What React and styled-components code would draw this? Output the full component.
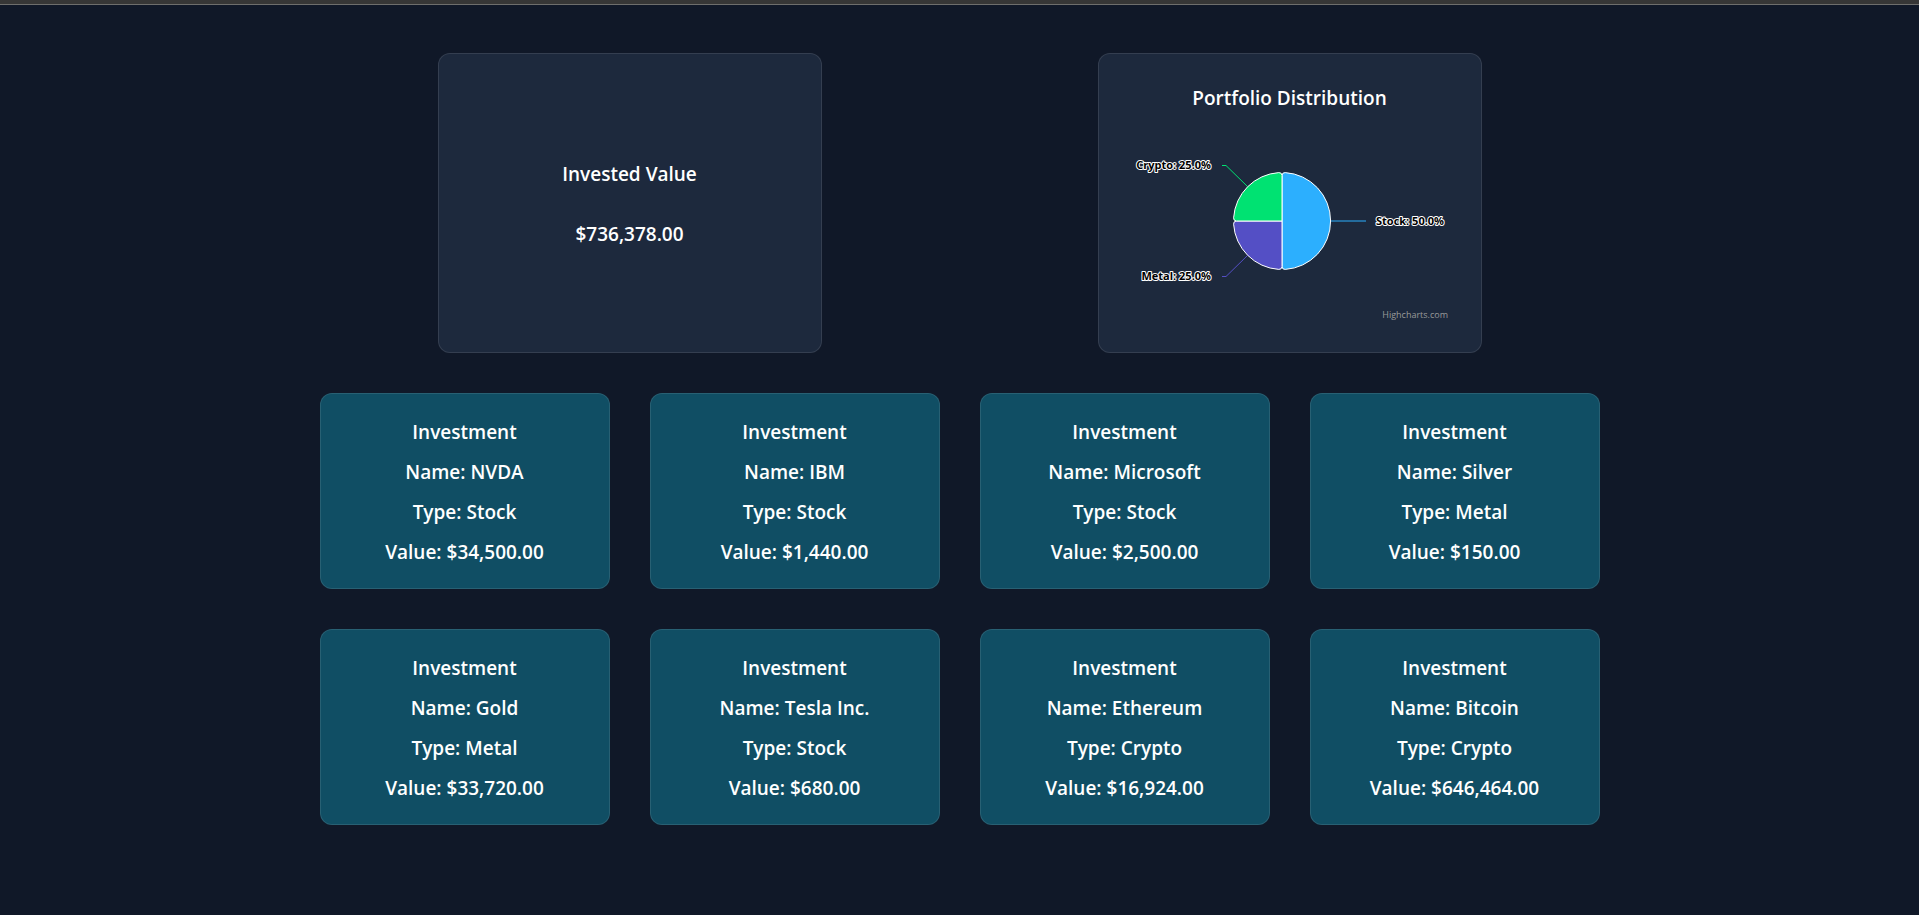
import React from "react";
import styled, { createGlobalStyle } from "styled-components";

const GlobalStyle = createGlobalStyle`
  *, *::before, *::after { box-sizing: border-box; }
  body {
    margin: 0;
    background: #101828;
    color: #fff;
    font-family: "Segoe UI", "Open Sans", "Noto Sans", sans-serif;
  }
`;

const TopEdge = styled.header`
  height: 5px;
  background: #363636;
  border-bottom: 1px solid #6e6e6c;
`;

const Page = styled.main`
  max-width: 1280px;
  margin: 0 auto;
  padding: 48px 0;
  display: flex;
  flex-direction: column;
  gap: 40px;
`;

const SummaryGrid = styled.section`
  display: grid;
  grid-template-columns: repeat(2, minmax(0, 1fr));
  gap: 40px;
  justify-items: center;
`;

const InvestmentGrid = styled.section`
  display: grid;
  grid-template-columns: repeat(4, minmax(0, 1fr));
  gap: 40px;
`;

const Card = styled.article`
  display: flex;
  flex-direction: column;
  align-items: center;
  justify-content: center;
  border: 1px solid rgba(255, 255, 255, 0.1);
  border-radius: 12px;
  text-align: center;
`;

const SummaryCard = styled(Card)`
  width: 100%;
  max-width: 384px;
  min-height: 300px;
  padding: 26px 24px 24px;
  gap: ${({ $gap }) => $gap}px;
  background: #1d293d;
`;

const InvestmentCard = styled(Card)`
  padding: 24px 24px 22px;
  gap: 12px;
  background: #104e64;
`;

const Heading = styled.h2`
  margin: 0;
  font-size: 19px;
  line-height: 28px;
  font-weight: 600;
`;

const Line = styled.p`
  margin: 0;
  font-size: 19px;
  line-height: 28px;
  font-weight: 600;
`;

const Chart = styled.svg`
  display: block;
  width: 100%;
  height: 196px;
`;

const Slice = styled.path`
  stroke: #fff;
  stroke-width: 1;
  stroke-linejoin: round;
`;

const Connector = styled.path`
  fill: none;
  stroke-width: 1;
`;

const SliceLabel = styled.text`
  font-size: 11px;
  font-weight: 700;
  fill: #000;
  stroke: #fff;
  stroke-width: 2px;
  stroke-linejoin: round;
  paint-order: stroke;
`;

const Credit = styled.text`
  font-size: 9px;
  fill: #999;
`;

const slices = [
  {
    label: "Stock: 50.0%",
    color: "#2caffe",
    shape: "M159 48.5A3 3 0 0 1 162.2 45.6A48.5 48.5 0 0 1 162.2 142.4A3 3 0 0 1 159 139.5Z",
    connector: "M243 94L208 94",
    x: 253,
    y: 98,
    anchor: "start",
  },
  {
    label: "Metal: 25.0%",
    color: "#544fc5",
    shape: "M159 94L159 139.5A3 3 0 0 1 155.8 142.4A48.5 48.5 0 0 1 110.6 97.2A3 3 0 0 1 113.5 94Z",
    connector: "M99 149.5L103 149.5L125 128",
    x: 88,
    y: 153,
    anchor: "end",
  },
  {
    label: "Crypto: 25.0%",
    color: "#00e272",
    shape: "M159 94L113.5 94A3 3 0 0 1 110.6 90.8A48.5 48.5 0 0 1 155.8 45.6A3 3 0 0 1 159 48.5Z",
    connector: "M99 38.5L103 38.5L125 60",
    x: 88,
    y: 42,
    anchor: "end",
  },
];

const investments = [
  { name: "NVDA", type: "Stock", value: 34500 },
  { name: "IBM", type: "Stock", value: 1440 },
  { name: "Microsoft", type: "Stock", value: 2500 },
  { name: "Silver", type: "Metal", value: 150 },
  { name: "Gold", type: "Metal", value: 33720 },
  { name: "Tesla Inc.", type: "Stock", value: 680 },
  { name: "Ethereum", type: "Crypto", value: 16924 },
  { name: "Bitcoin", type: "Crypto", value: 646464 },
];

const money = (value) =>
  value.toLocaleString("en-US", { style: "currency", currency: "USD" });

const total = investments.reduce((sum, item) => sum + item.value, 0);

function DistributionChart() {
  return (
    <Chart viewBox="0 1 334 196" role="img" aria-label="Portfolio Distribution">
      {slices.map((s) => (
        <Connector key={s.label} d={s.connector} stroke={s.color} />
      ))}
      {slices.map((s) => (
        <Slice key={s.label} d={s.shape} fill={s.color} />
      ))}
      {slices.map((s) => (
        <SliceLabel key={s.label} x={s.x} y={s.y} textAnchor={s.anchor}>
          {s.label}
        </SliceLabel>
      ))}
      <Credit x="325" y="191" textAnchor="end">
        Highcharts.com
      </Credit>
    </Chart>
  );
}

export default function App() {
  return (
    <>
      <GlobalStyle />
      <TopEdge />
      <Page>
        <SummaryGrid>
          <SummaryCard $gap={32}>
            <Heading>Invested Value</Heading>
            <Line>{money(total)}</Line>
          </SummaryCard>
          <SummaryCard $gap={16}>
            <Heading>Portfolio Distribution</Heading>
            <DistributionChart />
          </SummaryCard>
        </SummaryGrid>
        <InvestmentGrid>
          {investments.map((item) => (
            <InvestmentCard key={item.name}>
              <Heading>Investment</Heading>
              <Line>Name: {item.name}</Line>
              <Line>Type: {item.type}</Line>
              <Line>Value: {money(item.value)}</Line>
            </InvestmentCard>
          ))}
        </InvestmentGrid>
      </Page>
    </>
  );
}
